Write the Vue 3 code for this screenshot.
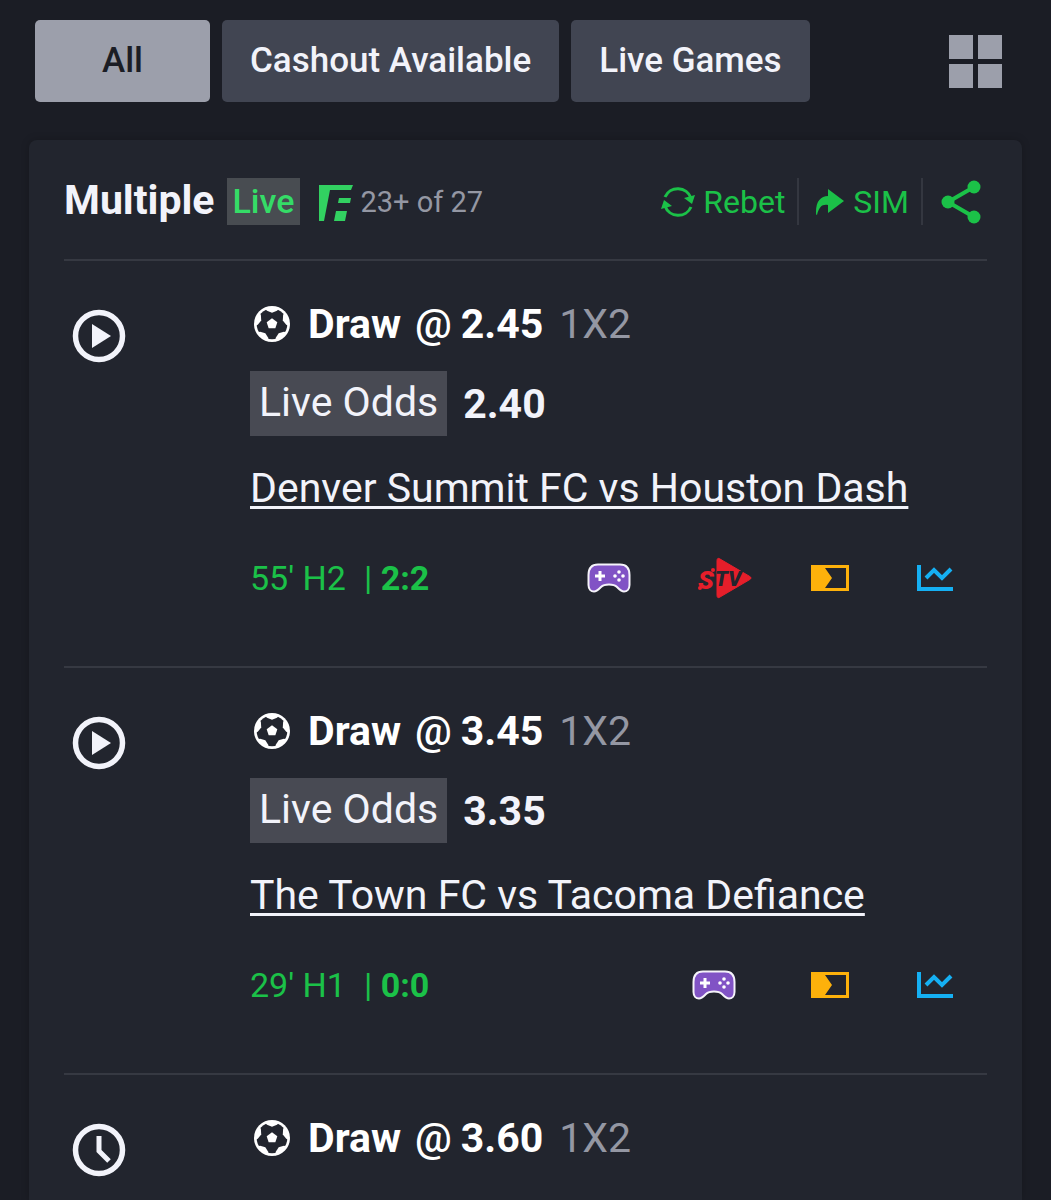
<template>
  <main class="bets-page">
    <nav class="toolbar" aria-label="Bet filters">
      <button
        v-for="filter in filters"
        :key="filter"
        type="button"
        class="filter-btn"
        :class="{ active: filter === activeFilter }"
        @click="activeFilter = filter"
      >{{ filter }}</button>
      <button type="button" class="icon-btn grid-btn" aria-label="Grid view">
        <svg width="53" height="53" viewBox="0 0 53 53" fill="currentColor">
          <path d="M0 0h24v24H0zM29 0h24v24H29zM0 29h24v24H0zM29 29h24v24H29z" />
        </svg>
      </button>
    </nav>

    <section class="ticket">
      <header class="ticket-header">
        <h1>Multiple</h1>
        <span class="live-tag">Live</span>
        <svg class="flex-logo" width="34" height="36" viewBox="0 0 34 36" fill="currentColor">
          <path d="M0 0h34l-2 5H11L5 36H0zM20 13h12l-1 5H19zM17 26h11l-2 10H15z" />
        </svg>
        <span class="count">23+ of 27</span>

        <div class="actions">
          <button type="button" class="icon-btn action">
            <svg width="34" height="34" viewBox="0 0 34 34">
              <g fill="none" stroke="currentColor" stroke-width="3">
                <path d="M4 12A14 14 0 0 1 30 13" />
                <path d="M30 22A14 14 0 0 1 4 21" />
              </g>
              <path d="M23 13l11-3-3 9zM0 24l3-9 8 6z" fill="currentColor" />
            </svg>
            Rebet
          </button>
          <button type="button" class="icon-btn action">
            <svg width="30" height="28" viewBox="0 0 30 28" fill="currentColor">
              <path d="M13 1l16 12-16 12v-8C7 16 4 19 2 27c-1 0-1-1-1-3C1 13 6 8 13 8z" />
            </svg>
            SIM
          </button>
          <button type="button" class="icon-btn action share" aria-label="Share">
            <svg width="40" height="44" viewBox="0 0 40 44">
              <path d="M33 7L7 22l26 15" fill="none" stroke="currentColor" stroke-width="4" />
              <g fill="currentColor">
                <circle cx="33" cy="7" r="6.5" />
                <circle cx="7" cy="22" r="6.5" />
                <circle cx="33" cy="37" r="6.5" />
              </g>
            </svg>
          </button>
        </div>
      </header>

      <article v-for="bet in bets" :key="bet.odds" class="bet">
        <div class="bet-status">
          <svg width="54" height="54" viewBox="0 0 54 54">
            <circle cx="27" cy="27" r="23.5" fill="none" stroke="currentColor" stroke-width="5.5" />
            <path v-if="bet.live" d="M20 15l19 12-19 12z" fill="currentColor" />
            <path v-else d="M27 13v15l10 10" fill="none" stroke="currentColor" stroke-width="5" />
          </svg>
        </div>

        <div class="bet-body">
          <div class="pick">
            <svg class="ball" width="36" height="36" viewBox="-54 -54 108 108" fill="currentColor">
              <circle r="54" />
              <circle r="46" class="ball-dark" />
              <path d="M0-17L16-5 10 13H-10L-16-5z" />
              <path
                v-for="angle in [0, 72, 144, 216, 288]"
                :key="angle"
                d="M-23-48L-15-40 0-34 15-40 23-48z"
                :transform="`rotate(${angle})`"
              />
            </svg>
            <strong>{{ bet.pick }}</strong>
            <span class="at">@</span>
            <strong>{{ bet.odds }}</strong>
            <span class="market">1X2</span>
          </div>

          <template v-if="bet.live">
            <div class="live-odds">
              <span class="live-odds-label">Live Odds</span>
              <strong>{{ bet.liveOdds }}</strong>
            </div>
            <a href="#" class="match">{{ bet.match }}</a>
            <div class="bet-footer">
              <span>{{ bet.time }}</span>
              <span class="score"><span class="bar">|</span> {{ bet.score }}</span>

              <div class="tools">
                <button type="button" class="icon-btn tool gamepad" aria-label="Games">
                  <svg width="44" height="30" viewBox="0 0 44 30">
                    <path
                      d="M11 1.5H33C39 1.5 42.5 5 42.5 12V22C42.5 26 40 28.5 37 28.5C34 28.5 32 26 30 24C28 22 26 21.5 22 21.5S16 22 14 24C12 26 10 28.5 7 28.5C4 28.5 1.5 26 1.5 22V12C1.5 5 5 1.5 11 1.5Z"
                      fill="#8153c5"
                      stroke="#f5f3fa"
                      stroke-width="2"
                    />
                    <path d="M13 8v10M8 13h10" stroke="#fff" stroke-width="3" />
                    <g fill="#fff">
                      <circle cx="32" cy="9" r="1.8" />
                      <circle cx="32" cy="17" r="1.8" />
                      <circle cx="28" cy="13" r="1.8" />
                      <circle cx="36" cy="13" r="1.8" />
                    </g>
                  </svg>
                </button>
                <button v-if="bet.tv" type="button" class="icon-btn tool" aria-label="Watch on STV">
                  <svg width="56" height="42" viewBox="0 0 56 42">
                    <path
                      d="M23 2L52 19q4 2 0 4L23 40q-3 2-3-2V4q0-4 3-2z"
                      fill="#e61e2a"
                      stroke="#e61e2a"
                      stroke-linejoin="round"
                    />
                    <text x="1" y="32" class="stv-s">S</text>
                    <circle cx="16" cy="13" r="2" fill="#e61e2a" />
                    <circle cx="3" cy="31" r="2" fill="#e61e2a" />
                    <text x="18" y="29" class="stv-tv">TV</text>
                  </svg>
                </button>
                <button type="button" class="icon-btn tool" aria-label="Cashout">
                  <svg width="38" height="26" viewBox="0 0 38 26" fill="#fdb10b">
                    <path fill-rule="evenodd" d="M0 0h38v26H0zM14 3l7 10-7 10h21V3z" />
                  </svg>
                </button>
                <button type="button" class="icon-btn tool" aria-label="Statistics">
                  <svg width="36" height="26" viewBox="0 0 36 26" fill="none" stroke="#15b0f3" stroke-width="4">
                    <path d="M2 0v24h34M9 13l8-8 8 8 9-9" />
                  </svg>
                </button>
              </div>
            </div>
          </template>
        </div>
      </article>
    </section>
  </main>
</template>

<script setup>
import { ref } from 'vue'

const filters = ['All', 'Cashout Available', 'Live Games']
const activeFilter = ref('All')

const bets = [
  {
    pick: 'Draw',
    odds: '2.45',
    live: true,
    liveOdds: '2.40',
    match: 'Denver Summit FC vs Houston Dash',
    time: "55' H2",
    score: '2:2',
    tv: true
  },
  {
    pick: 'Draw',
    odds: '3.45',
    live: true,
    liveOdds: '3.35',
    match: 'The Town FC vs Tacoma Defiance',
    time: "29' H1",
    score: '0:0',
    tv: false
  },
  { pick: 'Draw', odds: '3.60', live: false }
]
</script>

<style>
body {
  margin: 0;
  background: #1b1d25;
}
</style>

<style scoped>
.bets-page {
  box-sizing: border-box;
  min-height: 100vh;
  padding: 20px 29px 0;
  display: flex;
  flex-direction: column;
  background: #1b1d25;
  color: #f2f3fa;
  font-family: Roboto, "Liberation Sans", sans-serif;
  font-size: 41px;
  line-height: 46px;
}

button {
  font: inherit;
  border: 0;
  cursor: pointer;
}

svg {
  display: block;
  flex: none;
}

.toolbar {
  display: flex;
  align-items: center;
  gap: 12px;
  padding: 0 20px 0 6px;
}

.filter-btn {
  min-width: 175px;
  height: 82px;
  padding: 0 28px;
  border-radius: 5px;
  background: #414552;
  color: #f2f3fa;
  font-size: 35px;
  font-weight: 500;
  white-space: nowrap;
}

.filter-btn.active {
  background: #9c9fab;
  color: #1b1d25;
}

.icon-btn {
  display: flex;
  align-items: center;
  padding: 0;
  background: none;
}

.grid-btn {
  margin-left: auto;
  color: #9c9fab;
}

.ticket {
  flex: 1;
  margin-top: 38px;
  padding: 0 35px;
  border-radius: 8px 8px 0 0;
  background: #22252e;
  box-shadow: 0 0 8px rgba(0, 0, 0, 0.2);
}

.ticket-header {
  display: flex;
  align-items: center;
  height: 119px;
  white-space: nowrap;
}

h1 {
  margin: 0;
  font-size: 41px;
  font-weight: 700;
}

.live-tag {
  margin: 4px 0 0 12px;
  padding: 0 6px;
  background: #484c51;
  color: #35dc67;
  font-size: 34px;
  font-weight: 500;
  line-height: 47px;
}

.flex-logo {
  margin: 6px 7px 0 19px;
  color: #32d161;
}

.count {
  margin-top: 4px;
  color: #9497a3;
  font-size: 29px;
}

.actions {
  display: flex;
  margin: 4px 0 0 auto;
}

.action {
  height: 47px;
  gap: 8px;
  color: #1bc148;
  font-size: 32px;
}

.action + .action {
  margin-left: 12px;
  padding-left: 16px;
  border-left: 2px solid #343740;
}

.action.share {
  padding: 0 6px 0 18px;
}

.bet {
  display: flex;
  padding: 40px 0 64px;
  border-top: 2px solid #363942;
}

.bet:last-child {
  padding-bottom: 0;
}

.bet-status {
  width: 186px;
  padding: 8px 0 0 8px;
  box-sizing: border-box;
}

.bet-body {
  flex: 1;
  min-width: 0;
}

.pick {
  display: flex;
  align-items: center;
  padding-left: 4px;
  color: #fff;
}

.ball {
  margin-right: 18px;
}

.ball-dark {
  fill: #22252e;
}

.at {
  margin: 0 9px 0 14px;
  font-weight: 500;
}

.market {
  margin-left: 16px;
  color: #9497a3;
}

.live-odds {
  display: flex;
  align-items: center;
  gap: 16px;
  margin-top: 24px;
}

.live-odds-label {
  padding: 0 9px 2px;
  background: #484a53;
  line-height: 63px;
}

.match {
  display: block;
  width: fit-content;
  margin-top: 29px;
  color: inherit;
  text-decoration-thickness: 3px;
  text-underline-offset: 4px;
}

.bet-footer {
  display: flex;
  align-items: center;
  margin-top: 43px;
  color: #1bc148;
  font-size: 34px;
}

.score {
  margin-left: 18px;
  font-weight: 700;
}

.bar {
  font-weight: 400;
}

.tools {
  display: flex;
  margin-left: auto;
}

.tool {
  justify-content: center;
  width: 105px;
  height: 48px;
}

.gamepad {
  padding-right: 22px;
}

.stv-s {
  fill: #e61e2a;
  font-size: 26px;
  font-style: italic;
  font-weight: 900;
}

.stv-tv {
  fill: #22252e;
  font-size: 21px;
  font-style: italic;
  font-weight: 900;
}
</style>
